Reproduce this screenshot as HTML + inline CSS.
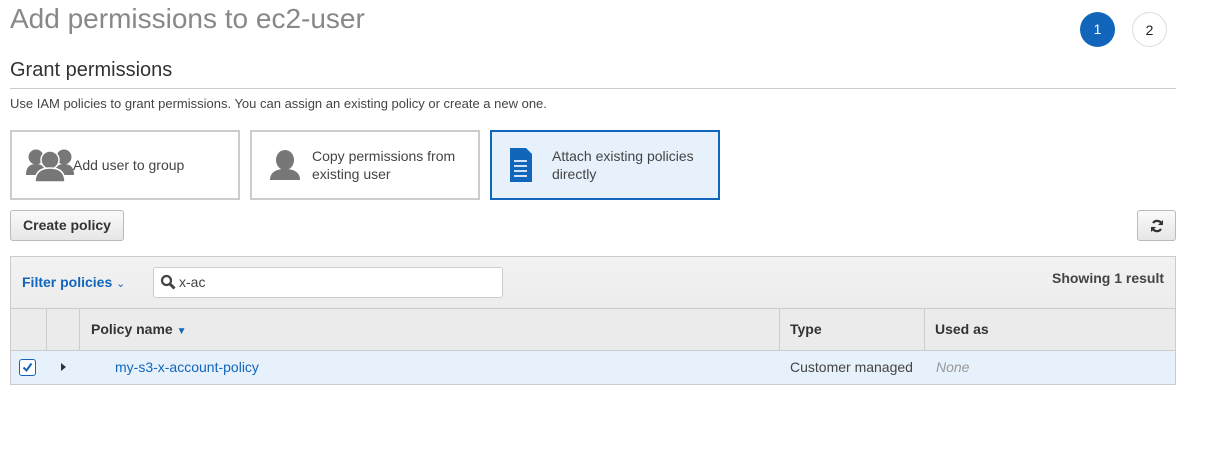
<!DOCTYPE html>
<html><head><meta charset="utf-8"><style>
*{box-sizing:border-box;margin:0;padding:0}
body{width:1212px;height:468px;background:#fff;font-family:"Liberation Sans",sans-serif;color:#444;position:relative;overflow:hidden}
.a{position:absolute}
h1{position:absolute;left:10px;top:3px;font-size:28px;font-weight:normal;color:#888}
.c{position:absolute;width:35px;height:35px;border-radius:50%;font-size:14px;text-align:center;line-height:35px}
.card{position:absolute;top:130px;width:230px;height:70px;border:2px solid #ccc;background:#fff;font-size:14px;color:#444}
.card .t{position:absolute;top:0;bottom:0;display:flex;align-items:center;line-height:18px}
.btn{position:absolute;border:1px solid #bbb;border-radius:3px;background:linear-gradient(#fafafa,#e6e6e6);font-weight:bold;font-size:14px;color:#333;text-align:center}
</style></head><body>
<h1>Add permissions to ec2-user</h1>
<div class="c" style="left:1080px;top:12px;background:#1166bb;color:#fff">1</div>
<div class="c" style="left:1132px;top:12px;border:1px solid #ddd;color:#222">2</div>
<div class="a" style="left:10px;top:59px;font-size:20px;color:#333">Grant permissions</div>
<div class="a" style="left:10px;top:88px;width:1166px;height:1px;background:#ccc"></div>
<div class="a" style="left:10px;top:96px;font-size:13px;color:#444">Use IAM policies to grant permissions. You can assign an existing policy or create a new one.</div>

<div class="card" style="left:10px">
<svg class="a" style="left:14px;top:16px" width="48" height="34" viewBox="0 0 48 34" fill="#777">
<circle cx="10" cy="9" r="7.5"/><circle cx="38" cy="9" r="7.5"/><path d="M0 27c0-8 4-11 10-11s10 3 10 11z"/><path d="M28 27c0-8 4-11 10-11s10 3 10 11z"/>
<circle cx="24" cy="12" r="9" stroke="#fff" stroke-width="1.5"/><path d="M9 34c0-10 6-14 15-14s15 4 15 14z" stroke="#fff" stroke-width="1.5"/></svg>
<div class="t" style="left:61px">Add user to group</div></div>

<div class="card" style="left:250px">
<svg class="a" style="left:17px;top:18px" width="32" height="32" viewBox="0 0 32 32" fill="#777"><ellipse cx="16" cy="10" rx="9" ry="10"/><path d="M1 30c0-7 5-11 15-11s15 4 15 11z"/></svg>
<div class="t" style="left:60px">Copy permissions from<br>existing user</div></div>

<div class="card" style="left:490px;border-color:#1166bb;background:#e6f1fc">
<svg class="a" style="left:17px;top:16px" width="23" height="35" viewBox="0 0 23 35"><path d="M1 0h16l6 6v28H1z" fill="#1166bb"/><g fill="#cfe2f7"><rect x="5" y="12" width="13" height="2"/><rect x="5" y="17" width="13" height="2"/><rect x="5" y="22" width="13" height="2"/><rect x="5" y="27" width="13" height="2"/></g></svg>
<div class="t" style="left:60px">Attach existing policies<br>directly</div></div>

<div class="btn" style="left:10px;top:210px;width:114px;height:31px;line-height:29px">Create policy</div>
<div class="btn" style="left:1137px;top:210px;width:39px;height:31px">
<svg class="a" style="left:12px;top:8px" width="14" height="14" viewBox="0 0 14 14" fill="none" stroke="#333" stroke-width="2.2"><path d="M12 6A5 5 0 0 0 3 4"/><path d="M2 8a5 5 0 0 0 9 2"/><path d="M13 1v5H8z" fill="#333" stroke="none"/><path d="M1 13V8h5z" fill="#333" stroke="none"/></svg></div>

<div class="a" style="left:10px;top:256px;width:1166px;height:129px;border:1px solid #ccc;background:linear-gradient(#f2f2f2,#e4e4e4)"></div>
<div class="a" style="left:22px;top:274px;font-size:14px;font-weight:bold;color:#1166bb">Filter policies <span style="font-weight:normal;font-size:11px">&#8964;</span></div>
<div class="a" style="left:153px;top:267px;width:350px;height:31px;background:#fff;border:1px solid #ccc;border-radius:3px">
<svg class="a" style="left:6px;top:6px" width="16" height="16" viewBox="0 0 16 16" fill="none" stroke="#444" stroke-width="2.2"><circle cx="6.5" cy="6.5" r="4.5"/><path d="M10 10l4.5 4.5" stroke-width="3"/></svg>
<span class="a" style="left:25px;top:6px;font-size:14px;color:#444">x-ac</span></div>
<div class="a" style="right:48px;top:270px;font-size:14px;font-weight:bold;color:#444">Showing 1 result</div>

<div class="a" style="left:11px;top:308px;width:1164px;height:1px;background:#ccc"></div>
<div class="a" style="left:11px;top:309px;width:1164px;height:41px;background:#ebebeb"></div>
<div class="a" style="left:46px;top:309px;width:1px;height:41px;background:#ccc"></div>
<div class="a" style="left:79px;top:309px;width:1px;height:41px;background:#ccc"></div>
<div class="a" style="left:779px;top:309px;width:1px;height:41px;background:#ccc"></div>
<div class="a" style="left:924px;top:309px;width:1px;height:41px;background:#ccc"></div>
<div class="a" style="left:91px;top:321px;font-size:14px;font-weight:bold;color:#333">Policy name <span style="color:#1166bb;font-size:10px">&#9660;</span></div>
<div class="a" style="left:790px;top:321px;font-size:14px;font-weight:bold;color:#333">Type</div>
<div class="a" style="left:935px;top:321px;font-size:14px;font-weight:bold;color:#333">Used as</div>
<div class="a" style="left:11px;top:350px;width:1164px;height:1px;background:#ccc"></div>
<div class="a" style="left:11px;top:351px;width:1164px;height:33px;background:#e6f1fc"></div>
<div class="a" style="left:10px;top:384px;width:1166px;height:1px;background:#ccc"></div>
<div class="a" style="left:19px;top:359px;width:17px;height:17px;border:1.5px solid #1166bb;border-radius:3px;background:#fff">
<svg class="a" style="left:2px;top:2px" width="11" height="11" viewBox="0 0 11 11" fill="none" stroke="#1166bb" stroke-width="2"><path d="M1.5 5.5l3 3 5-7"/></svg></div>
<div class="a" style="left:61px;top:363px;width:0;height:0;border-left:5px solid #333;border-top:4px solid transparent;border-bottom:4px solid transparent"></div>
<div class="a" style="left:115px;top:359px;font-size:14px;color:#1166bb">my-s3-x-account-policy</div>
<div class="a" style="left:790px;top:359px;font-size:14px;color:#444">Customer managed</div>
<div class="a" style="left:936px;top:359px;font-size:14px;color:#999;font-style:italic">None</div>
</body></html>
